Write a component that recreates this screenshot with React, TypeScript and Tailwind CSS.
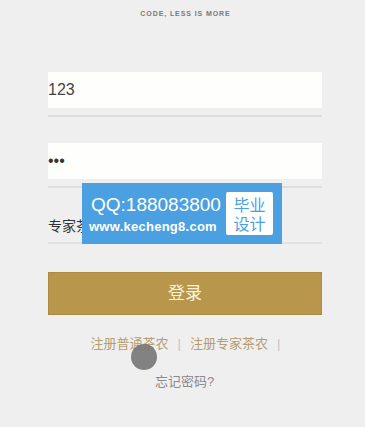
import { useState } from "react";

const cjk = "font-['Liberation_Sans','Noto_Sans_CJK_SC',sans-serif]";

export default function App() {
  const [phone, setPhone] = useState("123");
  const [pwd, setPwd] = useState("123");
  const [role, setRole] = useState("专家茶农");

  return (
    <div className={`relative min-h-screen w-[365px] h-[427px] overflow-hidden bg-[#efefef] ${cjk}`}>
      <p className="pt-[9px] pl-[6px] text-center text-[7px] leading-[9px] font-bold tracking-[0.13em] text-[#7a7a7a]">
        CODE, LESS IS MORE
      </p>

      <form className="ml-[48px] w-[274px] mt-[54px]" onSubmit={(e) => e.preventDefault()}>
        <input
          value={phone}
          onChange={(e) => setPhone(e.target.value)}
          className="block w-full h-[36px] bg-[#fefefc] text-[16px] text-[#444] outline-none"
        />
        <div className="mt-[7px] h-[2px] bg-[#dedede]" />

        <input
          type="password"
          value={pwd}
          onChange={(e) => setPwd(e.target.value)}
          className="block mt-[26px] w-full h-[36px] bg-[#fefefc] text-[16px] text-[#333] outline-none"
        />
        <div className="mt-[7px] h-[2px] bg-[#dedede]" />

        <div className="mt-[22px] h-[32px] flex items-center text-[14px] text-[#333]">
          <span onClick={() => setRole(role)}>{role}</span>
        </div>
        <div className="h-[2px] bg-[#e2e2e2]" />

        <button
          type="submit"
          className="mt-[28px] w-full h-[43px] bg-[#b8964b] border border-[#ab8a42] text-[17px] text-[#fcf4dc]"
        >
          登录
        </button>
      </form>

      <div className="mt-[21px] flex justify-center pl-[6px] text-[13px] leading-[16px] text-[#b59e72]">
        <a href="#">注册普通茶农</a>
        <span className="mx-[9px] text-[#c4c4c4]">|</span>
        <a href="#">注册专家茶农</a>
        <span className="ml-[9px] text-[#c4c4c4]">|</span>
      </div>
      <p className="mt-[22px] text-center pl-[4px] text-[13px] leading-[16px] text-[#8a8a8a]">忘记密码?</p>

      <div className="absolute left-[131px] top-[344px] w-[26px] h-[26px] rounded-full bg-[#6f6f6f]/85" />

      <div className="absolute left-[82px] top-[183px] w-[200px] h-[61px] bg-[#4aa0e1] flex items-center pl-[7px] pr-[9px]">
        <div className="flex flex-col text-white w-[136px] shrink-0">
          <span className="pl-[2px] text-[19px] leading-[21px] font-['Liberation_Sans',sans-serif]">QQ:188083800</span>
          <span className="mt-[4px] text-[13px] leading-[15px] font-bold font-['Liberation_Sans',sans-serif] tracking-[0.02em]">
            www.kecheng8.com
          </span>
        </div>
        <div className="w-[47px] h-[43px] ml-auto bg-white rounded-[2px] flex flex-col items-center justify-center text-[16px] leading-[19px] text-[#4aa0e1] font-['Noto_Sans_CJK_SC',sans-serif]">
          <span>毕业</span>
          <span>设计</span>
        </div>
      </div>
    </div>
  );
}
